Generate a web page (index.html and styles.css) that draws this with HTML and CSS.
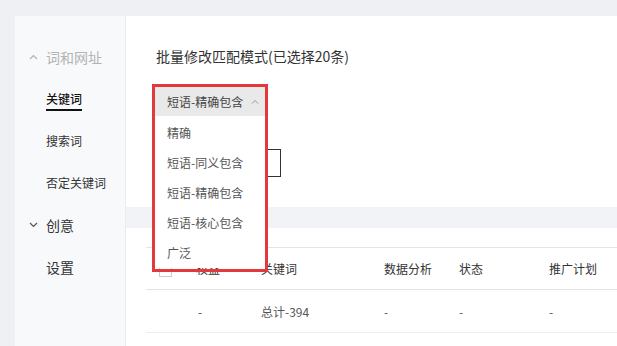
FILE: index.html
```html
<!DOCTYPE html>
<html>
    <head>
        <link rel="stylesheet" href="styles.css">
        <title>批量修改匹配模式</title>
        <meta charset="utf-8">
    </head>
    <body>
        <div class="page">
            <div class="sidebar">
                <div class="nav-item group muted">
                    <svg class="chev" width="9" height="6" viewBox="0 0 9 6"><path d="M1 5 L4.5 1.5 L8 5" fill="none" stroke="#b3b3b3" stroke-width="1.2"/></svg>
                    <span>词和网址</span>
                </div>
                <div class="nav-item small"><span class="active">关键词</span></div>
                <div class="nav-item small"><span>搜索词</span></div>
                <div class="nav-item small"><span>否定关键词</span></div>
                <div class="nav-item group">
                    <svg class="chev" width="9" height="6" viewBox="0 0 9 6"><path d="M1 1 L4.5 4.5 L8 1" fill="none" stroke="#555" stroke-width="1.2"/></svg>
                    <span>创意</span>
                </div>
                <div class="nav-item"><span>设置</span></div>
            </div>

            <div class="main">
                <div class="card batch">
                    <div class="title">批量修改匹配模式(已选择20条)</div>
                    <div class="picker">
                        <div class="select">
                            <span>短语-精确包含</span>
                            <svg width="8" height="5" viewBox="0 0 8 5"><path d="M1 4.5 L4 1.5 L7 4.5" fill="none" stroke="#999" stroke-width="1"/></svg>
                        </div>
                        <ul class="menu">
                            <li>精确</li>
                            <li>短语-同义包含</li>
                            <li>短语-精确包含</li>
                            <li>短语-核心包含</li>
                            <li>广泛</li>
                        </ul>
                        <div class="mark"></div>
                    </div>
                    <div class="confirm">批量</div>
                </div>

                <div class="gap"></div>

                <div class="card list">
                    <div class="grid head">
                        <div><span class="check"></span></div>
                        <div>权益</div>
                        <div>关键词</div>
                        <div>数据分析</div>
                        <div>状态</div>
                        <div>推广计划</div>
                    </div>
                    <div class="grid row">
                        <div></div>
                        <div>-</div>
                        <div>总计-394</div>
                        <div>-</div>
                        <div>-</div>
                        <div>-</div>
                    </div>
                </div>
            </div>
        </div>
    </body>
</html>
```

FILE: styles.css
```css
body {
    margin: 0;
    background-color: #eff0f4;
    font-family: "Noto Sans CJK SC", "Noto Sans", sans-serif;
    color: #333;
}

.page {
    display: flex;
    height: 330px;
    padding: 16px 0 0 15px;
    overflow: hidden;
}

/* left nav */
.sidebar {
    width: 110px;
    flex-shrink: 0;
    background-color: #f8f9fb;
    border-right: 1px solid #e9ebef;
    padding-top: 20px;
}
.nav-item {
    height: 42px;
    display: flex;
    align-items: center;
    padding-left: 31px;
    font-size: 14px;
    line-height: 20px;
    color: #333;
}
.nav-item.small {
    font-size: 12px;
    line-height: 16px;
}
.nav-item.group {
    padding-left: 14px;
}
.nav-item .chev {
    flex-shrink: 0;
    margin-right: 8px;
}
.nav-item.muted {
    color: #b3b3b3;
}
.active {
    padding-bottom: 2px;
    border-bottom: 2px solid #111;
    color: #111;
    font-weight: 500;
    margin-top: 4px;
}

/* content */
.main {
    flex: 1;
    display: flex;
    flex-direction: column;
}
.card {
    background-color: #fff;
}
.batch {
    height: 191px;
    box-sizing: border-box;
    padding: 30px 0 0 29px;
}
.title {
    font-size: 14px;
    line-height: 20px;
    padding-left: 1px;
}
.picker {
    position: relative;
    width: 110px;
    margin-top: 21px;
    z-index: 2;
}
.select {
    height: 29px;
    display: flex;
    align-items: center;
    justify-content: space-between;
    padding: 0 6px 0 12px;
    background-color: #e9e9e9;
    font-size: 12px;
    color: #444;
}
.menu {
    position: absolute;
    top: 29px;
    left: 0;
    width: 110px;
    margin: 0;
    padding: 2px 0 0 0;
    list-style: none;
    background-color: #fff;
}
.menu li {
    height: 30px;
    line-height: 30px;
    padding-left: 12px;
    font-size: 12px;
    color: #555;
}
.mark {
    position: absolute;
    top: -3px;
    left: -3px;
    width: 116px;
    height: 188px;
    box-sizing: border-box;
    border: 3px solid #e3383c;
}
.confirm {
    width: 126px;
    height: 28px;
    box-sizing: border-box;
    margin-top: 33px;
    border: 1px solid #333;
    font-size: 12px;
    line-height: 26px;
    text-align: right;
    padding-right: 13px;
}

.gap {
    height: 21px;
    background-color: #f2f3f7;
}

.list {
    flex: 1;
    padding: 19px 0 0 20px;
}
.grid {
    display: grid;
    grid-template-columns: 50px 65px 123px 75px 90px 1fr;
    align-items: center;
    font-size: 12px;
    border-top: 1px solid #e4e4e4;
}
.head {
    height: 41px;
    color: #333;
}
.row {
    height: 42px;
    color: #555;
    border-bottom: 1px solid #eceeef;
}
.row div:nth-child(2) {
    padding-left: 2px;
}
.check {
    display: block;
    width: 11px;
    height: 11px;
    margin-left: 13px;
    margin-top: 4px;
    border: 1px solid #ccc;
}
```
